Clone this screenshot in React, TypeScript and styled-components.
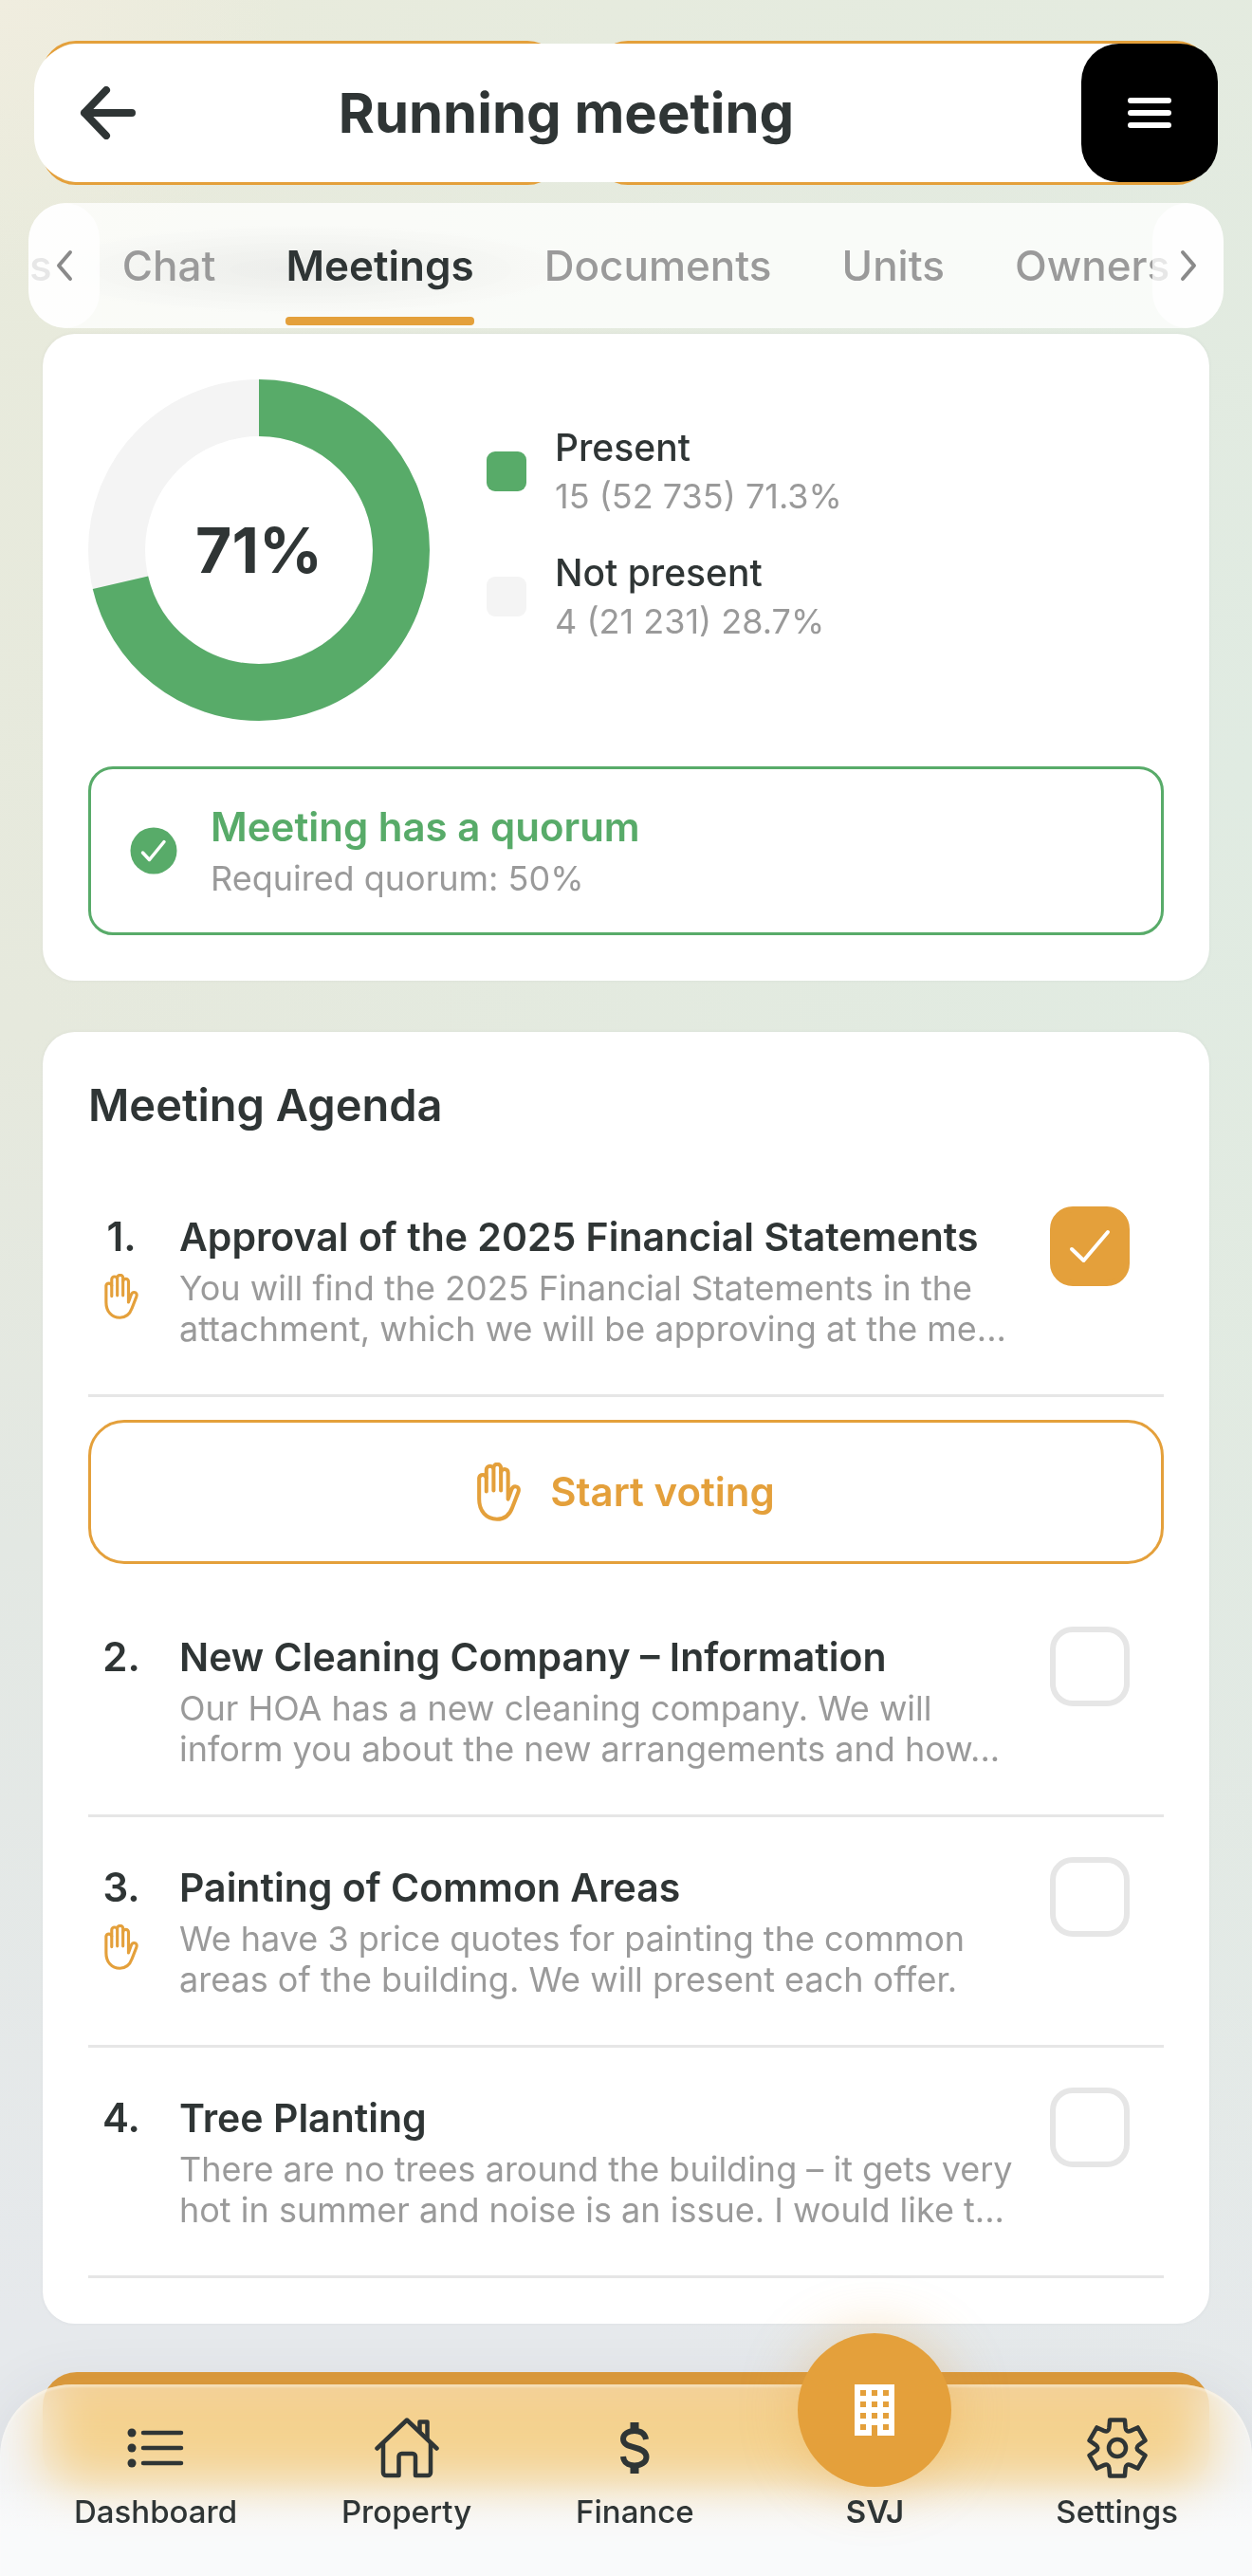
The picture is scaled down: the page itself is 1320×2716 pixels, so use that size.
import React, { useState } from "react";
import styled, { createGlobalStyle } from "styled-components";

const ink = "#2f3535";
const muted = "#9a9a9a";
const orange = "#e4a03b";
const green = "#58ab69";

const GlobalStyle = createGlobalStyle`
  *, *::before, *::after { box-sizing: border-box; }
  body {
    margin: 0;
    font-family: Inter, "Liberation Sans", sans-serif;
    color: ${ink};
    background:
      radial-gradient(circle at 0 0, #f0eddf 0, rgba(240, 237, 223, 0) 300px),
      radial-gradient(ellipse at 100% 30%, #e0ebe2 0, rgba(224, 235, 226, 0) 70%),
      linear-gradient(#e9ebdc 0, #e6e9dd 40%, #e3e8e3 60%, #e6e9ec 90%);
  }
  button { font: inherit; color: inherit; background: none; border: 0; padding: 0; cursor: pointer; }
  h1, h2, h3, p, ol { margin: 0; padding: 0; font-weight: inherit; }
`;

const Page = styled.div`
  min-height: 100vh;
  padding: 46px 0 96px;
`;

/* header */

const HeaderWrap = styled.header`
  position: relative;
  margin: 0 36px;
`;

const Underlay = styled.div`
  position: absolute;
  inset: -3px 8px;
  display: grid;
  grid-template-columns: 548px 1fr;
  gap: 34px;
`;

const UnderlayPill = styled.div`
  border: 3px solid ${orange};
  border-radius: 36px;
`;

const HeaderBar = styled.div`
  position: relative;
  display: flex;
  align-items: center;
  height: 146px;
  border-radius: 48px;
  background: #fff;
`;

const BackButton = styled.button`
  display: flex;
  align-items: center;
  width: 126px;
  height: 100%;
  padding-left: 48px;
`;

const Title = styled.h1`
  flex: 1;
  padding-right: 108px;
  text-align: center;
  font-size: 58px;
  line-height: 72px;
  font-weight: 700;
`;

const MenuButton = styled.button`
  display: grid;
  place-items: center;
  width: 144px;
  height: 100%;
  border-radius: 40px;
  background: #000;
`;

/* tabs */

const TabBar = styled.nav`
  position: relative;
  height: 132px;
  margin: 22px 30px 6px;
  border-radius: 40px;
  overflow: hidden;
  background:
    radial-gradient(ellipse 290px 48px at 290px 70px, rgba(120, 125, 125, 0.11), rgba(120, 125, 125, 0)),
    rgba(255, 255, 255, 0.78);
`;

const TabList = styled.div`
  display: flex;
  gap: 74px;
  height: 100%;
  padding-left: 1px;
`;

const Tab = styled.button<{ $active?: boolean }>`
  position: relative;
  flex: none;
  font-size: 44px;
  font-weight: ${(p) => (p.$active ? 600 : 500)};
  color: ${(p) => (p.$active ? ink : muted)};
  &::after {
    content: "";
    display: ${(p) => (p.$active ? "block" : "none")};
    position: absolute;
    inset: auto 0 3px;
    height: 9px;
    border-radius: 4px;
    background: ${orange};
  }
`;

const ScrollButton = styled.button<{ $side: "left" | "right" }>`
  position: absolute;
  top: 0;
  bottom: 0;
  ${(p) => p.$side}: 0;
  width: 75px;
  display: flex;
  align-items: center;
  justify-content: center;
  border-radius: 38px;
  background: rgba(255, 255, 255, 0.76);
`;

/* cards */

const Main = styled.main`
  display: flex;
  flex-direction: column;
  gap: 54px;
  padding: 0 45px;
`;

const Card = styled.section`
  padding: 48px;
  border-radius: 34px;
  background: #fff;
  box-shadow: 0 0 4px rgba(60, 60, 90, 0.06);
`;

const Attendance = styled.div`
  display: flex;
  gap: 60px;
`;

const Chart = styled.div`
  display: grid;
  place-items: center;
  width: 360px;
  height: 360px;
  > * { grid-area: 1 / 1; }
`;

const ChartValue = styled.strong`
  font-size: 66px;
  line-height: 72px;
  font-weight: 700;
`;

const Legend = styled.div`
  display: flex;
  flex-direction: column;
  gap: 30px;
  padding-top: 46px;
`;

const LegendRow = styled.div`
  display: flex;
  align-items: center;
  gap: 30px;
`;

const Swatch = styled.span<{ $color: string }>`
  width: 42px;
  height: 42px;
  border-radius: 9px;
  background: ${(p) => p.$color};
`;

const LegendName = styled.p`
  font-size: 39px;
  line-height: 52px;
  font-weight: 500;
`;

const Detail = styled.p`
  font-size: 36px;
  line-height: 50px;
  color: ${muted};
`;

const Quorum = styled.div`
  display: flex;
  align-items: center;
  gap: 35px;
  margin-top: 48px;
  padding: 32px 41px;
  border: 3px solid ${green};
  border-radius: 26px;
`;

const QuorumTitle = styled.p`
  font-size: 42px;
  line-height: 58px;
  font-weight: 600;
  color: ${green};
`;

const AgendaTitle = styled.h2`
  margin-bottom: 36px;
  font-size: 47px;
  line-height: 58px;
  font-weight: 600;
`;

const AgendaList = styled.ol`
  list-style: none;
`;

const Item = styled.div`
  display: flex;
  align-items: flex-start;
  padding: 42px 36px 47px 0;
  border-bottom: 3px solid #e6e6e6;
`;

const NumberCell = styled.div`
  display: flex;
  flex-direction: column;
  align-items: center;
  gap: 7px;
  width: 70px;
  margin-right: 26px;
  font-size: 42px;
  line-height: 64px;
  font-weight: 600;
`;

const ItemText = styled.div`
  flex: 1;
`;

const ItemTitle = styled.h3`
  margin-bottom: 1px;
  font-size: 41px;
  line-height: 64px;
  font-weight: 600;
`;

const ItemDescription = styled.p`
  font-size: 36px;
  line-height: 43px;
  color: ${muted};
  white-space: pre;
`;

const Check = styled.label`
  display: grid;
  place-items: center;
  cursor: pointer;
  > * { grid-area: 1 / 1; }
  svg { pointer-events: none; }
`;

const CheckInput = styled.input`
  appearance: none;
  width: 84px;
  height: 84px;
  margin: 0;
  border: 6px solid #e6e6e6;
  border-radius: 24px;
  background: #fff;
  &:checked {
    border-color: ${orange};
    background: ${orange};
  }
`;

const VoteButton = styled.button`
  display: flex;
  align-items: center;
  justify-content: center;
  gap: 31px;
  width: 100%;
  height: 152px;
  margin: 24px 0;
  border: 3px solid ${orange};
  border-radius: 38px;
  color: ${orange};
  font-size: 42px;
  line-height: 50px;
  font-weight: 600;
`;

const Banner = styled.div`
  height: 120px;
  margin-top: -3px;
  border-radius: 36px;
  background: #de9b3a;
`;

/* bottom navigation */

const BottomNav = styled.nav`
  position: fixed;
  inset: auto 0 0;
  display: flex;
  justify-content: space-between;
  padding: 35px 78px 48px;
  &::before {
    content: "";
    position: absolute;
    inset: 0;
    z-index: -1;
    border-radius: 76px 76px 0 0;
    background: linear-gradient(rgba(255, 255, 255, 0.54) 50%, rgba(255, 255, 255, 0.76) 75%);
    backdrop-filter: blur(28px) saturate(1.4) hue-rotate(5deg);
    box-shadow: 0 0 60px rgba(60, 70, 90, 0.08), inset 0 3px 2px rgba(255, 255, 255, 0.3);
  }
`;

const NavLink = styled.a<{ $active?: boolean }>`
  display: flex;
  flex-direction: column;
  align-items: center;
  gap: ${(p) => (p.$active ? 6 : 15)}px;
  margin-top: ${(p) => (p.$active ? -89 : 0)}px;
  color: ${ink};
  text-decoration: none;
  font-size: 33px;
  line-height: 40px;
  font-weight: ${(p) => (p.$active ? 600 : 500)};
`;

const NavIcon = styled.span`
  display: grid;
  place-items: center;
  height: 64px;
`;

const ActiveDisc = styled.span`
  display: grid;
  place-items: center;
  width: 162px;
  height: 162px;
  border-radius: 50%;
  background: ${orange};
  box-shadow: 0 0 60px rgba(228, 160, 59, 0.35);
`;

/* drawings */

const HandIcon = ({ width, height, stroke }: { width: number; height: number; stroke: number }) => (
  <svg width={width} height={height} viewBox="0 0 45 61" fill="none" stroke={orange} strokeWidth={stroke} strokeLinecap="round" strokeLinejoin="round" aria-hidden="true">
    <path d="M9.5 30V16a3.8 3.8 0 0 0-7.5 0V38C2 50.500 9.500 58.800 20.500 58.800C29 58.800 33.800 54 36.500 46.500L42.500 31C44 27 42 24.800 39.500 24.800C37.500 24.800 36.300 26 35.400 28.500L32 38V10.500a3.700 3.700 0 0 0-7.400 0" />
    <path d="M9.500 16V7.500a3.700 3.700 0 0 1 7.500 0V29M17 7.500V5.500a3.800 3.800 0 0 1 7.600 0V29" />
  </svg>
);

const ListIcon = () => (
  <svg width="60" height="44" viewBox="0 0 60 44" stroke={ink} strokeLinecap="round" aria-hidden="true">
    {[6, 22, 38].map((y) => (
      <g key={y}>
        <circle cx="5" cy={y} r="4.500" fill={ink} stroke="none" />
        <path d={`M17 ${y}H57`} strokeWidth="4.500" />
      </g>
    ))}
  </svg>
);

const HouseIcon = () => (
  <svg width="68" height="64" viewBox="0 0 68 64" fill="none" stroke={ink} strokeWidth="4.500" strokeLinecap="round" strokeLinejoin="round" aria-hidden="true">
    <path d="M2.500 32.500L34 2.500L65.500 32.500" />
    <path d="M9 27V58a3 3 0 0 0 3 3H25.500V41a3 3 0 0 1 3-3H40a3 3 0 0 1 3 3V61H56a3 3 0 0 0 3-3V27" />
    <path d="M47.500 14V4.500H55.500V22" />
  </svg>
);

const DollarIcon = () => (
  <svg width="32" height="54" viewBox="-1 0 32 54" fill="none" stroke={ink} aria-hidden="true">
    <path d="M27 18C26 12 21.500 9 15 9C8 9 3 12.500 3 17.500C3 23 8 24.700 15 26.500C22 28.300 27.500 30.500 27.500 36.500C27.500 42 22 45.500 15 45.500C8 45.500 3.500 42 3 36" strokeWidth="6" />
    <path d="M15 0V8M15 46V54" strokeWidth="9" />
  </svg>
);

const BuildingIcon = () => (
  <svg width="42" height="54" viewBox="0 0 42 54" aria-hidden="true">
    <path d="M0 0H42V54H24V43H18V54H0Z" fill="#fff" />
    {[6, 18, 30].map((y) =>
      [6, 18, 30].map((x) => <rect key={`${x}-${y}`} x={x} y={y} width="6" height="6" fill={orange} />)
    )}
    <rect x="6" y="42" width="6" height="6" fill={orange} />
    <rect x="30" y="42" width="6" height="6" fill={orange} />
  </svg>
);

const polar = (deg: number, r: number) => {
  const a = (deg * Math.PI) / 180;
  return `${(32 + r * Math.cos(a)).toFixed(2)} ${(32 + r * Math.sin(a)).toFixed(2)}`;
};

const gearPath =
  [0, 1, 2, 3, 4, 5]
    .map((k) => {
      const a = -90 + k * 60;
      return `${k ? "L" : "M"}${polar(a - 15, 30.5)}L${polar(a + 15, 30.5)}L${polar(a + 22, 23)}Q${polar(a + 30, 18.5)} ${polar(a + 38, 23)}`;
    })
    .join("") + "Z";

const GearIcon = () => (
  <svg width="64" height="64" viewBox="0 0 64 64" fill="none" stroke={ink} strokeWidth="4.500" strokeLinejoin="round" aria-hidden="true">
    <path d={gearPath} />
    <circle cx="32" cy="32" r="9" />
  </svg>
);

const Chevron = ({ d }: { d: string }) => (
  <svg width="20" height="34" viewBox="0 0 20 34" fill="none" stroke="#8a8a8a" strokeWidth="4" strokeLinecap="round" strokeLinejoin="round" aria-hidden="true">
    <path d={d} />
  </svg>
);

const Donut = ({ share }: { share: number }) => {
  const length = 2 * Math.PI * 150;
  return (
    <svg width="360" height="360" viewBox="0 0 360 360" fill="none" strokeWidth="60" aria-hidden="true">
      <circle cx="180" cy="180" r="150" stroke="#f4f4f4" />
      <circle cx="180" cy="180" r="150" stroke={green} strokeDasharray={`${length * share} ${length}`} transform="rotate(-90 180 180)" />
    </svg>
  );
};

/* data */

const tabs = ["s", "Chat", "Meetings", "Documents", "Units", "Owners"];

const agenda = [
  {
    title: "Approval of the 2025 Financial Statements",
    text: "You will find the 2025 Financial Statements in the\nattachment, which we will be approving at the me...",
    vote: true,
    done: true,
  },
  {
    title: "New Cleaning Company – Information",
    text: "Our HOA has a new cleaning company. We will\ninform you about the new arrangements and how...",
  },
  {
    title: "Painting of Common Areas",
    text: "We have 3 price quotes for painting the common\nareas of the building. We will present each offer.",
    vote: true,
  },
  {
    title: "Tree Planting",
    text: "There are no trees around the building – it gets very\nhot in summer and noise is an issue. I would like t...",
  },
];

export default function App() {
  const [done, setDone] = useState(agenda.map((item) => !!item.done));
  const toggle = (index: number) => setDone(done.map((value, i) => (i === index ? !value : value)));

  return (
    <>
      <GlobalStyle />
      <Page>
        <HeaderWrap>
          <Underlay>
            <UnderlayPill />
            <UnderlayPill />
          </Underlay>
          <HeaderBar>
            <BackButton aria-label="Back">
              <svg width="60" height="56" viewBox="0 0 60 56" fill="none" stroke={ink} strokeWidth="8" strokeLinecap="round" strokeLinejoin="round" aria-hidden="true">
                <path d="M28 4L5 28L28 52M5 28H55" />
              </svg>
            </BackButton>
            <Title>Running meeting</Title>
            <MenuButton aria-label="Menu">
              <svg width="46" height="38" viewBox="0 0 46 38" stroke="#fff" strokeWidth="6" strokeLinecap="round" aria-hidden="true">
                <path d="M3 6H43M3 19H43M3 32H43" />
              </svg>
            </MenuButton>
          </HeaderBar>
        </HeaderWrap>

        <TabBar>
          <TabList>
            {tabs.map((name) => (
              <Tab key={name} $active={name === "Meetings"}>
                {name}
              </Tab>
            ))}
          </TabList>
          <ScrollButton $side="left" aria-label="Previous tabs">
            <Chevron d="M16 3L4 17L16 31" />
          </ScrollButton>
          <ScrollButton $side="right" aria-label="Next tabs">
            <Chevron d="M4 3L16 17L4 31" />
          </ScrollButton>
        </TabBar>

        <Main>
          <Card>
            <Attendance>
              <Chart>
                <Donut share={0.713} />
                <ChartValue>71%</ChartValue>
              </Chart>
              <Legend>
                <LegendRow>
                  <Swatch $color={green} />
                  <div>
                    <LegendName>Present</LegendName>
                    <Detail>15 (52 735) 71.3%</Detail>
                  </div>
                </LegendRow>
                <LegendRow>
                  <Swatch $color="#f4f4f4" />
                  <div>
                    <LegendName>Not present</LegendName>
                    <Detail>4 (21 231) 28.7%</Detail>
                  </div>
                </LegendRow>
              </Legend>
            </Attendance>
            <Quorum>
              <svg width="50" height="50" viewBox="0 0 50 50" aria-hidden="true">
                <circle cx="25" cy="25" r="24.500" fill={green} />
                <path d="M13.500 27L20.500 34.500L36 15.500" fill="none" stroke="#fff" strokeWidth="3.500" strokeLinecap="round" strokeLinejoin="round" />
              </svg>
              <div>
                <QuorumTitle>Meeting has a quorum</QuorumTitle>
                <Detail>Required quorum: 50%</Detail>
              </div>
            </Quorum>
          </Card>

          <Card>
            <AgendaTitle>Meeting Agenda</AgendaTitle>
            <AgendaList>
              {agenda.map((item, index) => (
                <li key={item.title}>
                  <Item>
                    <NumberCell>
                      {index + 1}.
                      {item.vote && <HandIcon width={36} height={48} stroke={4} />}
                    </NumberCell>
                    <ItemText>
                      <ItemTitle>{item.title}</ItemTitle>
                      <ItemDescription>{item.text}</ItemDescription>
                    </ItemText>
                    <Check>
                      <CheckInput type="checkbox" aria-label={item.title} checked={done[index]} onChange={() => toggle(index)} />
                      {done[index] && (
                        <svg width="44" height="36" viewBox="0 0 44 36" fill="none" stroke="#fff" strokeWidth="4" strokeLinecap="round" strokeLinejoin="round" aria-hidden="true">
                          <path d="M3 21L15.500 33L41 3" />
                        </svg>
                      )}
                    </Check>
                  </Item>
                  {item.done && (
                    <VoteButton>
                      <HandIcon width={46} height={62} stroke={4} />
                      Start voting
                    </VoteButton>
                  )}
                </li>
              ))}
            </AgendaList>
          </Card>

          <Banner />
        </Main>
      </Page>

      <BottomNav>
        <NavLink href="#dashboard">
          <NavIcon><ListIcon /></NavIcon>
          Dashboard
        </NavLink>
        <NavLink href="#property">
          <NavIcon><HouseIcon /></NavIcon>
          Property
        </NavLink>
        <NavLink href="#finance">
          <NavIcon><DollarIcon /></NavIcon>
          Finance
        </NavLink>
        <NavLink href="#svj" $active>
          <ActiveDisc><BuildingIcon /></ActiveDisc>
          SVJ
        </NavLink>
        <NavLink href="#settings">
          <NavIcon><GearIcon /></NavIcon>
          Settings
        </NavLink>
      </BottomNav>
    </>
  );
}
